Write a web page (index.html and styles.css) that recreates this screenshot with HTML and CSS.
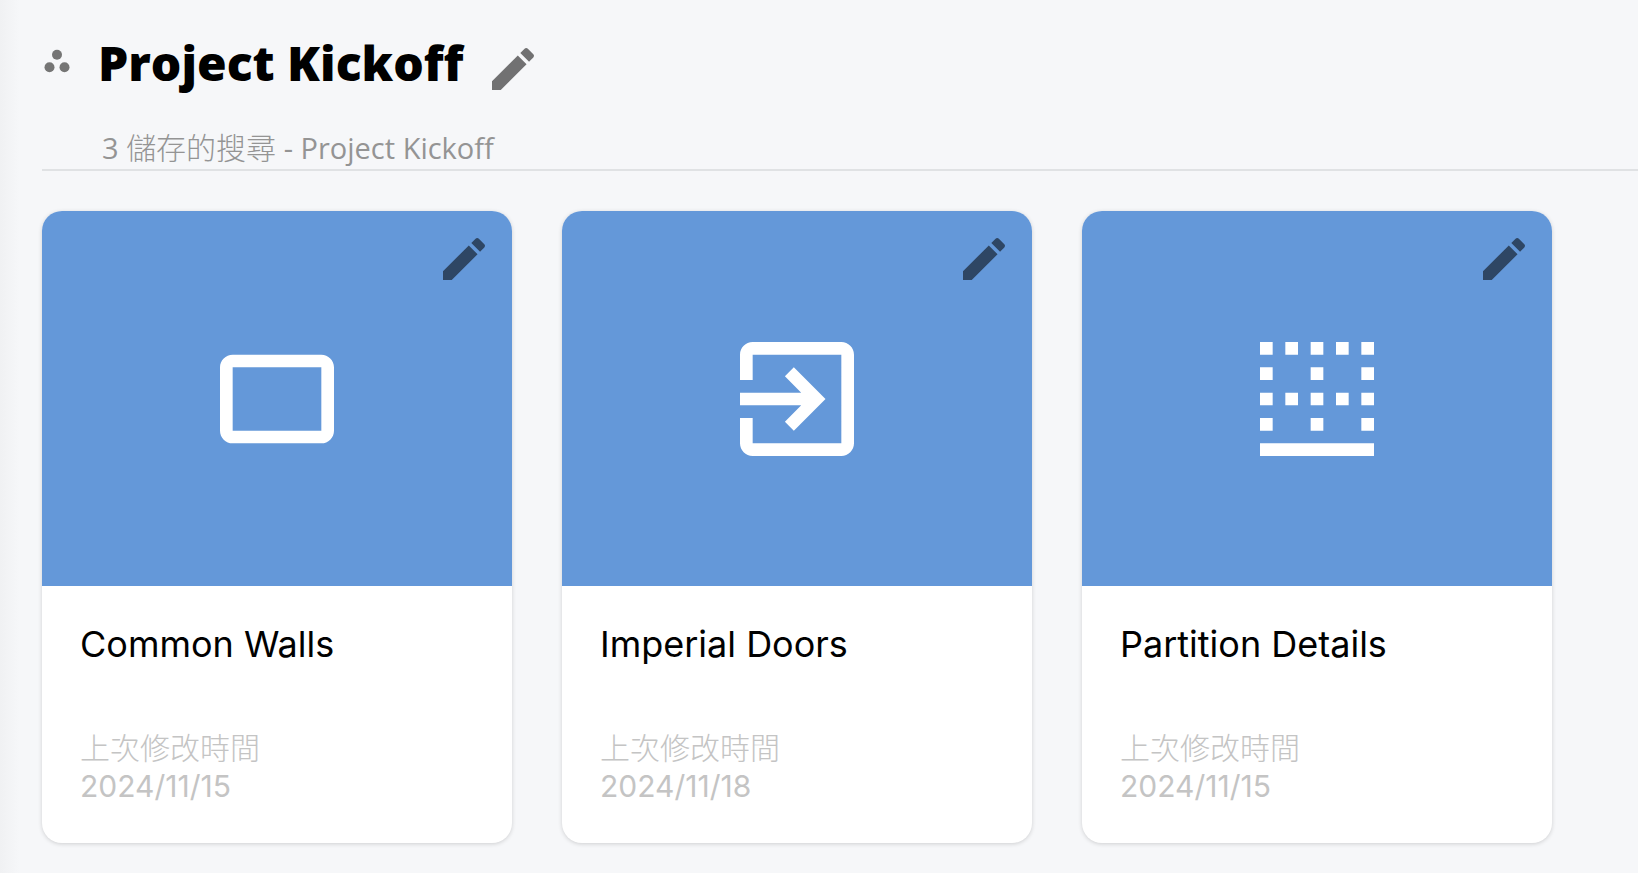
FILE: index.html
```html
<!DOCTYPE html>
<html lang="zh-Hant">
<head>
<meta charset="utf-8">
<meta name="viewport" content="width=device-width, initial-scale=1">
<title>Project Kickoff</title>
<link rel="stylesheet" href="styles.css">
</head>
<body>
<svg class="sprite" aria-hidden="true">
  <symbol id="icon-edit" viewBox="0 0 24 24"><path d="M3 17.25V21h3.75L17.81 9.94l-3.75-3.75L3 17.25zM20.71 7.04c.39-.39.39-1.02 0-1.41l-2.34-2.34c-.39-.39-1.02-.39-1.41 0l-1.83 1.83 3.75 3.75 1.83-1.83z"/></symbol>
</svg>
<main class="page">
  <header class="group-header">
    <div class="group-title-row">
      <svg class="group-icon" viewBox="0 0 24 24" aria-hidden="true"><circle cx="12" cy="7" r="4"/><circle cx="6" cy="17" r="4"/><circle cx="18" cy="17" r="4"/></svg>
      <h1 class="group-title">Project Kickoff</h1>
      <button class="icon-button" type="button" aria-label="Edit group"><svg viewBox="0 0 24 24"><use href="#icon-edit"/></svg></button>
    </div>
    <p class="group-summary">3 <span class="light">儲存的搜尋</span> - Project Kickoff</p>
  </header>
  <section class="cards">
    <article class="card">
      <div class="card-cover">
        <svg class="card-icon" viewBox="0 0 24 24" aria-hidden="true"><path d="M19 5H5c-1.1 0-2 .9-2 2v10c0 1.1.9 2 2 2h14c1.1 0 2-.9 2-2V7c0-1.1-.9-2-2-2zm0 12H5V7h14v10z"/></svg>
        <button class="icon-button card-edit" type="button" aria-label="Edit Common Walls"><svg viewBox="0 0 24 24"><use href="#icon-edit"/></svg></button>
      </div>
      <div class="card-body">
        <h2 class="card-title">Common Walls</h2>
        <p class="card-meta"><span class="light">上次修改時間</span><br><time datetime="2024-11-15">2024/11/15</time></p>
      </div>
    </article>
    <article class="card">
      <div class="card-cover">
        <svg class="card-icon" viewBox="0 0 24 24" aria-hidden="true"><path d="M10.09 15.59L11.5 17l5-5-5-5-1.41 1.41L12.67 11H3v2h9.67l-2.58 2.59zM19 3H5c-1.11 0-2 .9-2 2v4h2V5h14v14H5v-4H3v4c0 1.1.89 2 2 2h14c1.1 0 2-.9 2-2V5c0-1.1-.9-2-2-2z"/></svg>
        <button class="icon-button card-edit" type="button" aria-label="Edit Imperial Doors"><svg viewBox="0 0 24 24"><use href="#icon-edit"/></svg></button>
      </div>
      <div class="card-body">
        <h2 class="card-title">Imperial Doors</h2>
        <p class="card-meta"><span class="light">上次修改時間</span><br><time datetime="2024-11-18">2024/11/18</time></p>
      </div>
    </article>
    <article class="card">
      <div class="card-cover">
        <svg class="card-icon" viewBox="0 0 24 24" aria-hidden="true"><path d="M3 3h2v2H3zM7 3h2v2H7zM11 3h2v2h-2zM15 3h2v2h-2zM19 3h2v2h-2zM3 7h2v2H3zM11 7h2v2h-2zM19 7h2v2h-2zM3 11h2v2H3zM7 11h2v2H7zM11 11h2v2h-2zM15 11h2v2h-2zM19 11h2v2h-2zM3 15h2v2H3zM11 15h2v2h-2zM19 15h2v2h-2zM3 19h18v2H3z"/></svg>
        <button class="icon-button card-edit" type="button" aria-label="Edit Partition Details"><svg viewBox="0 0 24 24"><use href="#icon-edit"/></svg></button>
      </div>
      <div class="card-body">
        <h2 class="card-title">Partition Details</h2>
        <p class="card-meta"><span class="light">上次修改時間</span><br><time datetime="2024-11-15">2024/11/15</time></p>
      </div>
    </article>
  </section>
</main>
</body>
</html>
```
FILE: styles.css
```css
* {
  box-sizing: border-box;
}

body {
  margin: 0;
  min-height: 100vh;
  color: #000;
  background: linear-gradient(to right, #f0f1f3, #f6f7f9 20px);
  font-family: "Open Sans", "Noto Sans CJK TC", sans-serif;
}

h1, h2, p {
  margin: 0;
}

.sprite {
  display: none;
}

.light {
  font-size: 30px;
  font-weight: 300;
}

.page {
  padding: 29px 0 30px 42px;
}

.group-header {
  border-bottom: 2px solid #e0e2e4;
}

.group-title-row {
  display: flex;
  align-items: flex-start;
}

.group-icon {
  width: 30px;
  height: 30px;
  margin-top: 17px;
  margin-right: 26px;
  fill: #757575;
}

.group-title {
  font-size: 48px;
  font-weight: 800;
  line-height: 68px;
  white-space: nowrap;
}

.icon-button {
  display: flex;
  flex: none;
  width: 56px;
  height: 56px;
  margin-top: 12px;
  margin-left: 22px;
  padding: 0;
  border: 0;
  background: none;
  cursor: pointer;
}

.icon-button svg {
  width: 100%;
  height: 100%;
  fill: rgba(0, 0, 0, 0.54);
}

.group-summary {
  height: 42px;
  margin-top: 30px;
  padding-left: 60px;
  color: #949494;
  font-size: 29px;
  line-height: 42px;
}

.cards {
  display: flex;
  flex-wrap: wrap;
  gap: 50px;
  padding-top: 40px;
}

.card {
  flex: 0 0 470px;
  border-radius: 20px;
  background: #fff;
  box-shadow: 0 1px 4px rgba(0, 0, 0, 0.16);
  overflow: hidden;
}

.card-cover {
  position: relative;
  display: flex;
  align-items: center;
  justify-content: center;
  height: 375px;
  background: #6498d9;
}

.card-icon {
  width: 152px;
  height: 152px;
  fill: #fff;
}

.card-edit {
  position: absolute;
  top: 20px;
  right: 20px;
  margin: 0;
}

.card-body {
  padding: 33px 38px 38px;
  font-family: Inter, "Noto Sans CJK TC", sans-serif;
}

.card-title {
  font-size: 36px;
  font-weight: 400;
  line-height: 50px;
}

.card-meta {
  margin-top: 60px;
  color: #c4c4c4;
  font-size: 30px;
  line-height: 38px;
}
```
